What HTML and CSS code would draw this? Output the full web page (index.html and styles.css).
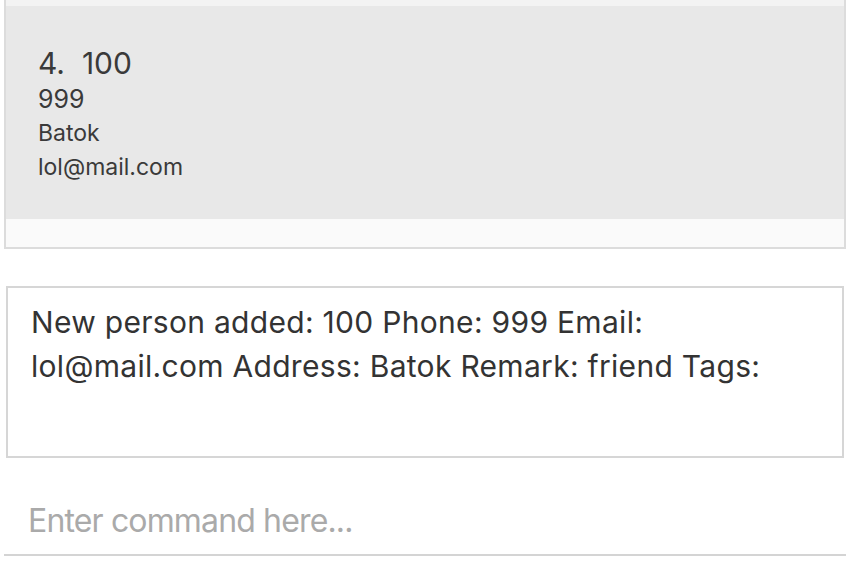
FILE: index.html
```html
<!DOCTYPE html>
<html lang="en">
<head>
<meta charset="utf-8">
<title>Address Book</title>
<link rel="stylesheet" href="styles.css">
</head>
<body>
<div class="app">
  <div class="person-panel">
    <div class="cell-prev"></div>
    <div class="card">
      <div class="card-name">4.&nbsp; 100</div>
      <div class="card-phone">999</div>
      <div class="card-line">Batok</div>
      <div class="card-line">lol@mail.com</div>
    </div>
    <div class="list-empty"></div>
  </div>
  <div class="result-box">New person added: 100 Phone: 999 Email: lol@mail.com Address: Batok Remark: friend Tags:</div>
  <div class="command-box">
    <input class="command-input" type="text" placeholder="Enter command here...">
  </div>
</div>
</body>
</html>
```
FILE: styles.css
```css
html, body {
  margin: 0;
  padding: 0;
  background: #ffffff;
}
body {
  font-family: Inter, "Noto Sans", sans-serif;
  color: #333333;
}
.app {
  width: 860px;
  height: 586px;
  display: flex;
  flex-direction: column;
}
.person-panel {
  margin-left: 4px;
  width: 838px;
  height: 247px;
  border: 2px solid #dcdcdc;
  border-top: none;
  display: flex;
  flex-direction: column;
}
.cell-prev {
  height: 6px;
  background: #f3f3f3;
}
.card {
  height: 174px;
  padding: 39px 0 0 32px;
  background: #e8e8e8;
  color: #3a3a3a;
}
.card-name {
  font-size: 30px;
  line-height: 37px;
}
.card-phone {
  font-size: 25px;
  line-height: 34px;
}
.card-line {
  font-size: 23px;
  line-height: 34px;
}
.list-empty {
  flex: 1;
  background: #fafafa;
}
.result-box {
  margin: 37px 0 0 6px;
  box-sizing: border-box;
  width: 838px;
  height: 172px;
  border: 2px solid #d6d6d6;
  padding: 12px 40px 0 23px;
  font-size: 30px;
  line-height: 44px;
  letter-spacing: 0.3px;
  color: #333333;
}
.command-box {
  margin: 42px 0 0 4px;
  width: 842px;
}
.command-input {
  display: block;
  width: 100%;
  box-sizing: border-box;
  height: 56px;
  margin: 0;
  padding: 0 0 14px 24px;
  border: none;
  border-bottom: 2px solid #d4d4d4;
  outline: none;
  background: transparent;
  font-family: Inter, "Noto Sans", sans-serif;
  font-size: 32px;
  line-height: 40px;
  letter-spacing: -0.85px;
  color: #333333;
}
.command-input::placeholder {
  color: #aaaaaa;
  opacity: 1;
}
```
